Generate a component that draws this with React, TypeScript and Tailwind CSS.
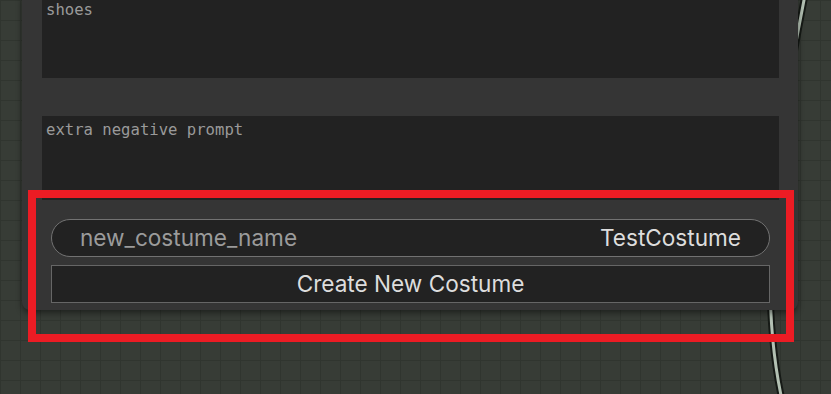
import React from 'react';

const mono = { fontFamily: '"DejaVu Sans Mono", "Liberation Mono", monospace' };

export default function App() {
  return (
    <div
      className="relative w-[831px] h-[394px] overflow-hidden bg-[#373c36] bg-[linear-gradient(to_right,#30352f_1px,transparent_1px),linear-gradient(to_bottom,#30352f_1px,transparent_1px)] bg-[size:20px_20px] pl-[22px]"
      style={{ fontFamily: 'Inter, "Noto Sans", sans-serif' }}
    >
      {/* link wire behind the node */}
      <svg className="absolute inset-0" width="831" height="394" viewBox="0 0 831 394">
        <path d="M806,-10 C772,160 758,290 782,400" fill="none" stroke="#161a16" strokeWidth="7" />
        <path d="M806,-10 C772,160 758,290 782,400" fill="none" stroke="#b3c1b3" strokeWidth="3" />
      </svg>

      {/* node body */}
      <div className="relative w-[776px] -mt-[4px] bg-[#353535] rounded-b-[8px] shadow-[0_3px_6px_rgba(0,0,0,0.45)] flex flex-col pb-[7px]">
        <div className="mx-[20px] mr-[19px] h-[82px] bg-[#222222] pl-[4px] pt-[5px] text-[15.6px] leading-[18px] text-[#9a9a9a]" style={mono}>
          shoes
        </div>
        <div className="mx-[20px] mr-[19px] mt-[38px] h-[84px] bg-[#222222] pl-[4px] pt-[5px] text-[15.6px] leading-[18px] text-[#9a9a9a]" style={mono}>
          extra negative prompt
        </div>

        <div className="mx-[29px] mr-[28px] mt-[19px] h-[38px] rounded-full border border-[#727272] bg-[#222222] flex items-center justify-between px-[28px] text-[22.6px]">
          <span className="text-[#9b9b9b]">new_costume_name</span>
          <span className="text-[#dddddd]">TestCostume</span>
        </div>
        <div className="mx-[29px] mr-[28px] mt-[8px] h-[38px] border border-[#666666] bg-[#222222] flex items-center justify-center text-[22.6px] text-[#dddddd]">
          Create New Costume
        </div>
      </div>

      {/* annotation frame */}
      <div className="absolute left-[28px] top-[190px] w-[766px] h-[152px] border-[8px] border-[#ec1c24]" />
    </div>
  );
}
